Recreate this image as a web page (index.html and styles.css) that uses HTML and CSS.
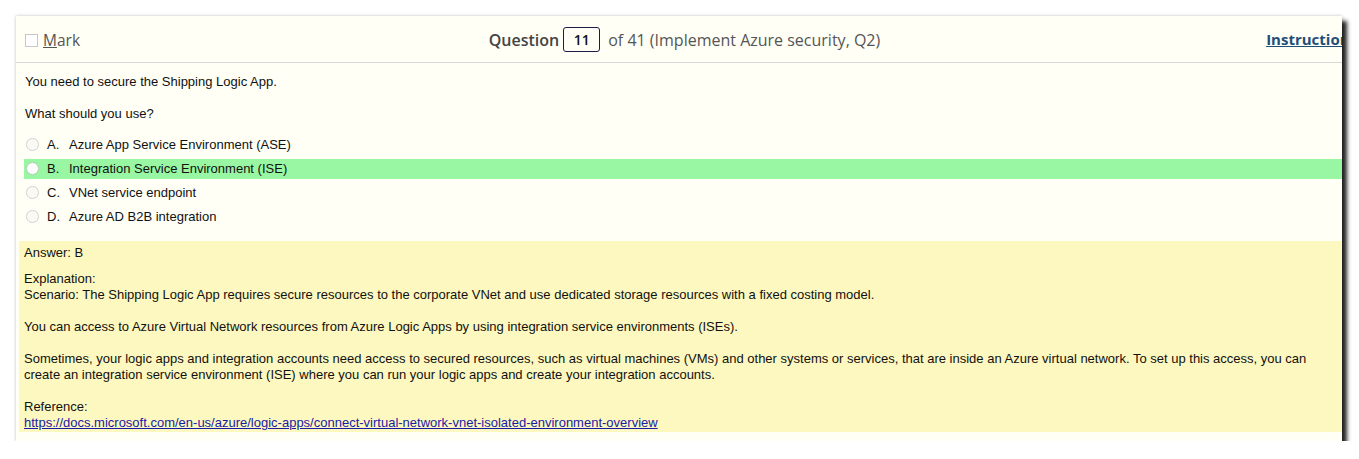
FILE: index.html
```html
<!DOCTYPE html>
<html>
<head>
<meta charset="utf-8">
<link rel="stylesheet" href="styles.css">
</head>
<body>
<div class="stage">
  <div class="panel">
    <div class="inner">
      <div class="header">
        <label class="mark"><span class="box"></span><span class="mark-text"><u>M</u>ark</span></label>
        <div class="qnum"><b>Question</b> <span class="numbox">11</span> <span class="of">of 41 (Implement Azure security, Q2)</span></div>
        <a class="instr" href="#">Instructions</a>
      </div>
      <div class="body">
        <p class="q">You need to secure the Shipping Logic App.</p>
        <p class="q q2">What should you use?</p>
        <ul class="opts">
          <li class="opt"><span class="radio"></span><span class="letter">A.</span><span>Azure App Service Environment (ASE)</span></li>
          <li class="opt correct"><span class="radio"></span><span class="letter">B.</span><span>Integration Service Environment (ISE)</span></li>
          <li class="opt"><span class="radio"></span><span class="letter">C.</span><span>VNet service endpoint</span></li>
          <li class="opt"><span class="radio"></span><span class="letter">D.</span><span>Azure AD B2B integration</span></li>
        </ul>
      </div>
      <div class="answer">
        <p class="ans">Answer: B</p>
        <p>Explanation:<br>Scenario: The Shipping Logic App requires secure resources to the corporate VNet and use dedicated storage resources with a fixed costing model.</p>
        <p>You can access to Azure Virtual Network resources from Azure Logic Apps by using integration service environments (ISEs).</p>
        <p>Sometimes, your logic apps and integration accounts need access to secured resources, such as virtual machines (VMs) and other systems or services, that are inside an Azure virtual network. To set up this access, you can create an integration service environment (ISE) where you can run your logic apps and create your integration accounts.</p>
        <p>Reference:<br><a href="#">https://docs.microsoft.com/en-us/azure/logic-apps/connect-virtual-network-vnet-isolated-environment-overview</a></p>
      </div>
    </div>
  </div>
</div>
</body>
</html>
```

FILE: styles.css
```css
html, body {
  margin: 0;
  padding: 0;
  background: #ffffff;
}
.stage {
  padding: 16px 0 0 16px;
}
.panel {
  width: 1326px;
  height: 425px;
  background: #fffff6;
  overflow: hidden;
  box-shadow: 5px 5px 4px rgba(0, 0, 0, 0.85), 0 0 3px rgba(0, 0, 0, 0.25);
}
.inner {
  width: 1341px;
}
.header {
  display: grid;
  grid-template-columns: 1fr auto 1fr;
  align-items: center;
  height: 46px;
  border-bottom: 1px solid #d8d8d4;
  font-family: "Open Sans", "Noto Sans", sans-serif;
  font-size: 15px;
  color: #555;
}
.mark {
  display: flex;
  align-items: center;
  padding-left: 9px;
  padding-top: 2px;
}
.box {
  width: 11px;
  height: 11px;
  border: 1px solid #c8c8c8;
  background: #fff;
  margin-right: 5px;
}
.mark-text {
  color: #555;
  font-size: 15.5px;
}
.qnum {
  display: flex;
  align-items: center;
  color: #444;
  font-size: 16px;
  padding-top: 1px;
  margin-left: -4px;
}
.qnum b {
  font-weight: 600;
}
.numbox {
  display: inline-flex;
  align-items: center;
  justify-content: center;
  width: 35px;
  height: 23px;
  border: 1px solid #1c1c44;
  border-radius: 3px;
  margin: 0 8px 0 4px;
  font-size: 14px;
  font-weight: 600;
  color: #111;
}
.of {
  color: #555;
}
.instr {
  justify-self: end;
  padding-right: 0;
  color: #1f4e79;
  font-weight: 700;
  font-size: 15px;
  text-decoration: underline;
}
.body {
  font-family: "Liberation Sans", Arial, sans-serif;
  font-size: 13px;
  color: #111;
  padding: 11px 0 10px 9px;
}
.q {
  margin: 0;
  line-height: 16px;
}
.q2 {
  margin-top: 16px;
}
.opts {
  list-style: none;
  margin: 13px 0 0 0;
  padding: 0;
}
.opt {
  display: flex;
  align-items: center;
  height: 20px;
  margin-bottom: 4px;
  padding-bottom: 2px;
  box-sizing: border-box;
}
.opt.correct {
  background: #99f6a2;
  margin-left: -1px;
  padding-left: 1px;
}
.radio {
  width: 11px;
  height: 11px;
  border-radius: 50%;
  border: 1px solid #d0d0d0;
  background: #fbfbf6;
  margin-left: 1px;
  margin-right: 8px;
}
.correct .radio {
  background: #fff;
  border-color: #b8c8b8;
}
.letter {
  width: 22px;
}
.answer {
  margin-left: 3px;
  margin-top: 0;
  background: #fdf8bf;
  font-family: "Liberation Sans", Arial, sans-serif;
  font-size: 13px;
  line-height: 16px;
  color: #111;
  padding: 4px 30px 1px 5px;
}
.answer p {
  margin: 0 0 16px 0;
}
.answer p.ans {
  margin-bottom: 10px;
}
.answer p:last-child {
  margin-bottom: 0;
}
.answer a {
  color: #1a1aa6;
  text-decoration: underline;
}
```
